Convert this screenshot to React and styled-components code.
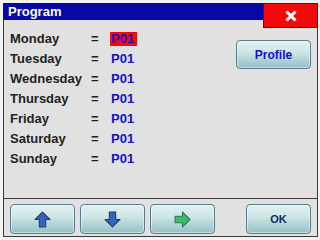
import { Fragment } from "react";
import styled, { createGlobalStyle } from "styled-components";

const GlobalStyle = createGlobalStyle`
  html, body {
    margin: 0;
    padding: 0;
    background: #f2f2f2;
    font-family: "Liberation Sans", Arial, sans-serif;
  }
`;

const Window = styled.div`
  box-sizing: border-box;
  margin: 3px 0 0 3px;
  width: 315px;
  height: 234px;
  display: flex;
  flex-direction: column;
  background: #e1e1e1;
  border: 1px solid #3a3a3a;
  border-top: none;
`;

const Header = styled.div`
  display: flex;
  align-items: flex-start;
  height: 17px;
  margin: 0 -1px;
`;

const TitleBar = styled.div`
  flex: 1;
  box-sizing: border-box;
  height: 17px;
  padding: 2px 0 0 5px;
  background: #0808a4;
  border-bottom: 1px solid #1a1a2a;
  color: #fff;
  font-size: 13px;
  font-weight: bold;
  line-height: 14px;
`;

const CloseButton = styled.div`
  position: relative;
  z-index: 1;
  box-sizing: border-box;
  width: 55px;
  height: 25px;
  background: #f20a0a;
  border: 1px solid #3a2020;
  display: flex;
  align-items: center;
  justify-content: center;
`;

const Content = styled.div`
  flex: 1;
  display: flex;
  justify-content: space-between;
  padding: 9px 6px 0 6px;
`;

const DayGrid = styled.div`
  display: grid;
  grid-template-columns: 80px 20px auto;
  grid-auto-rows: 20px;
  align-content: start;
  font-size: 13px;
  font-weight: bold;
  line-height: 20px;
`;

const Label = styled.div`
  color: #222;
`;

const Eq = styled.div`
  color: #222;
  padding-left: 1px;
`;

const Value = styled.div`
  display: flex;
  align-items: center;
`;

const Code = styled.span`
  display: inline-block;
  padding: 0 3px 0 1px;
  line-height: 14px;
  color: #1212cc;
  background: ${(p) => (p.$selected ? "#f20a0a" : "transparent")};
`;

const Button = styled.div`
  box-sizing: border-box;
  width: ${(p) => p.$w || 65}px;
  height: ${(p) => p.$h || 30}px;
  display: flex;
  align-items: center;
  justify-content: center;
  border: 1px solid #5d7b8a;
  border-radius: 4px;
  background: linear-gradient(#e0f1f1, #cfe6e6 40%, #92c1c4);
  box-shadow: inset 0 0 0 1px rgba(255, 255, 255, 0.45);
  font-weight: bold;
  color: ${(p) => p.$color || "#1212cc"};
  font-size: ${(p) => p.$size || 12}px;
`;

const Side = styled.div`
  padding-top: 11px;
`;

const Footer = styled.div`
  display: flex;
  align-items: flex-start;
  height: 38px;
  box-sizing: border-box;
  padding: 5px 6px 0 6px;
  border-top: 1px solid #3a3a3a;
`;

const NavGroup = styled.div`
  display: flex;
  gap: 5px;
  flex: 1;
`;

const CloseIcon = () => (
  <svg width="12" height="12" viewBox="0 0 12 12">
    <path d="M1.5 1.5 L10.5 10.5 M10.5 1.5 L1.5 10.5" stroke="#fff" strokeWidth="3" />
  </svg>
);

const UpArrow = () => (
  <svg width="17" height="17" viewBox="0 0 16 16">
    <path d="M8 1 L15 8 L11 8 L11 15 L5 15 L5 8 L1 8 Z" fill="#3266b4" stroke="#1c3b78" strokeWidth="1" strokeLinejoin="round" />
  </svg>
);

const DownArrow = () => (
  <svg width="17" height="17" viewBox="0 0 16 16">
    <path d="M8 15 L15 8 L11 8 L11 1 L5 1 L5 8 L1 8 Z" fill="#3266b4" stroke="#1c3b78" strokeWidth="1" strokeLinejoin="round" />
  </svg>
);

const RightArrow = () => (
  <svg width="17" height="17" viewBox="0 0 16 16">
    <path d="M15 8 L8 1 L8 5 L1 5 L1 11 L8 11 L8 15 Z" fill="#44b86c" stroke="#23804a" strokeWidth="1" strokeLinejoin="round" />
  </svg>
);

const days = ["Monday", "Tuesday", "Wednesday", "Thursday", "Friday", "Saturday", "Sunday"];

export default function App() {
  return (
    <>
      <GlobalStyle />
      <Window>
        <Header>
          <TitleBar>Program</TitleBar>
          <CloseButton>
            <CloseIcon />
          </CloseButton>
        </Header>
        <Content>
          <DayGrid>
            {days.map((d, i) => (
              <Fragment key={d}>
                <Label>{d}</Label>
                <Eq>=</Eq>
                <Value>
                  <Code $selected={i === 0}>P01</Code>
                </Value>
              </Fragment>
            ))}
          </DayGrid>
          <Side>
            <Button $w={75} $h={29}>Profile</Button>
          </Side>
        </Content>
        <Footer>
          <NavGroup>
            <Button><UpArrow /></Button>
            <Button><DownArrow /></Button>
            <Button><RightArrow /></Button>
          </NavGroup>
          <Button $color="#14285a" $size={11}>OK</Button>
        </Footer>
      </Window>
    </>
  );
}
